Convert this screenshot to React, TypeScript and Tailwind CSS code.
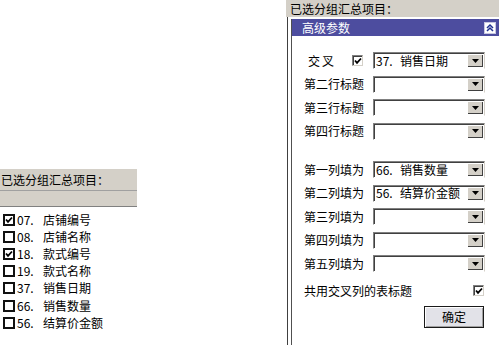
import React from "react";

const Check = () => (
  <svg width="8" height="8" viewBox="0 0 8 8" className="block">
    <path d="M1 3.5 L3 5.8 L7 1.5" stroke="#000" strokeWidth="1.8" fill="none" />
  </svg>
);

const ListBox = ({ checked }: { checked: boolean }) => (
  <div className="w-[12px] h-[12px] border-2 border-[#111] bg-white flex items-center justify-center shrink-0">
    {checked && <Check />}
  </div>
);

const SmallBox = ({ checked }: { checked: boolean }) => (
  <div className="w-[11px] h-[11px] border border-[#808080] border-b-[#d4d0c8] border-r-[#d4d0c8] shadow-[inset_1px_1px_0_#404040] bg-white flex items-center justify-center shrink-0">
    {checked && <Check />}
  </div>
);

const Select = ({ num, text }: { num?: string; text?: string }) => (
  <div className="w-[112px] h-[17px] border border-[#808080] border-b-white border-r-[#d4d0c8] shadow-[inset_1px_1px_0_#404040] bg-white flex items-center pl-[2px] pr-[1px]">
    <div className="flex-1 flex items-center leading-none">
      {num && <span className="w-[24px]">{num}</span>}
      {text && <span>{text}</span>}
    </div>
    <div className="w-[16px] h-[13px] bg-[#d4d0c8] shadow-[inset_1px_1px_0_#ffffff,inset_-1px_-1px_0_#404040] flex items-center justify-center">
      <svg width="7" height="4" viewBox="0 0 7 4" className="block">
        <path d="M0 0 H7 L3.5 4 Z" fill="#000" />
      </svg>
    </div>
  </div>
);

const items = [
  { n: "07.", t: "店铺编号", c: true },
  { n: "08.", t: "店铺名称", c: false },
  { n: "18.", t: "款式编号", c: true },
  { n: "19.", t: "款式名称", c: false },
  { n: "37.", t: "销售日期", c: false },
  { n: "66.", t: "销售数量", c: false },
  { n: "56.", t: "结算价金额", c: false },
];

const Row = ({ label, children }: { label: React.ReactNode; children: React.ReactNode }) => (
  <div className="h-[17px] flex items-center">
    <div className="w-[69px] shrink-0 leading-none">{label}</div>
    {children}
  </div>
);

export default function App() {
  return (
    <div className="w-[499px] h-[345px] bg-white flex overflow-hidden text-[12px] text-black font-['Noto_Sans_CJK_SC',sans-serif]">
      {/* left list */}
      <div className="w-[137px] shrink-0 pt-[169px] flex flex-col">
        <div className="h-[21px] bg-[#d4d0c8] pl-[1px] flex items-center leading-none">已选分组汇总项目：</div>
        <div className="h-[17px] bg-[#d4d0c8] border-t border-[#a0a0a0] border-b border-b-[#808080]" />
        <div className="pt-[4px] flex flex-col">
          {items.map((it) => (
            <div key={it.n} className="h-[17.2px] flex items-center pl-[3px]">
              <ListBox checked={it.c} />
              <span className="w-[26px] ml-[2px] leading-none">{it.n}</span>
              <span className="leading-none">{it.t}</span>
            </div>
          ))}
        </div>
      </div>

      <div className="w-[149px] shrink-0" />

      {/* right panel */}
      <div className="w-[213px] shrink-0 flex flex-col">
        <div className="h-[17px] bg-[#d4d0c8] pl-[4px] flex items-center leading-none">已选分组汇总项目：</div>
        <div className="flex-1 flex ml-[1px] border-l border-[#404040] pl-[3px] pt-[2px]">
          <div className="flex-1 flex flex-col border-l border-[#505050]">
            <div className="h-[17px] bg-[#4d4d9f] flex items-center justify-between pl-[10px] pr-[3px]">
              <span className="text-white leading-none">高级参数</span>
              <svg width="12" height="12" viewBox="0 0 12 12" className="block">
                <rect x="0.5" y="0.5" width="11" height="11" fill="#fff" stroke="#c8c8e0" />
                <path d="M3 6 L6 3 L9 6 M3 9 L6 6 L9 9" stroke="#1e2e8e" strokeWidth="1.5" fill="none" />
              </svg>
            </div>
            <div className="flex flex-col gap-[6.5px] pt-[16px] pl-[12px]">
              <Row
                label={
                  <div className="flex items-center">
                    <span className="pl-[4px] tracking-[2px] w-[48px]">交叉</span>
                    <SmallBox checked />
                  </div>
                }
              >
                <Select num="37." text="销售日期" />
              </Row>
              <Row label="第二行标题"><Select /></Row>
              <Row label="第三行标题"><Select /></Row>
              <Row label="第四行标题"><Select /></Row>
              <div className="mt-[15px]">
                <Row label="第一列填为"><Select num="66." text="销售数量" /></Row>
              </div>
              <Row label="第二列填为"><Select num="56." text="结算价金额" /></Row>
              <Row label="第三列填为"><Select /></Row>
              <Row label="第四列填为"><Select /></Row>
              <Row label="第五列填为"><Select /></Row>
              <div className="h-[17px] mt-[3.5px] flex items-center justify-between pr-[15px]">
                <span className="leading-none">共用交叉列的表标题</span>
                <SmallBox checked />
              </div>
              <div className="flex justify-end pr-[15px]">
                <button className="w-[60px] h-[22px] bg-[#e2e2e8] border border-[#1a1a1a] shadow-[inset_1px_1px_0_#ffffff,inset_-1px_-1px_0_#a0a0a0] leading-none">确定</button>
              </div>
            </div>
          </div>
        </div>
      </div>
    </div>
  );
}
